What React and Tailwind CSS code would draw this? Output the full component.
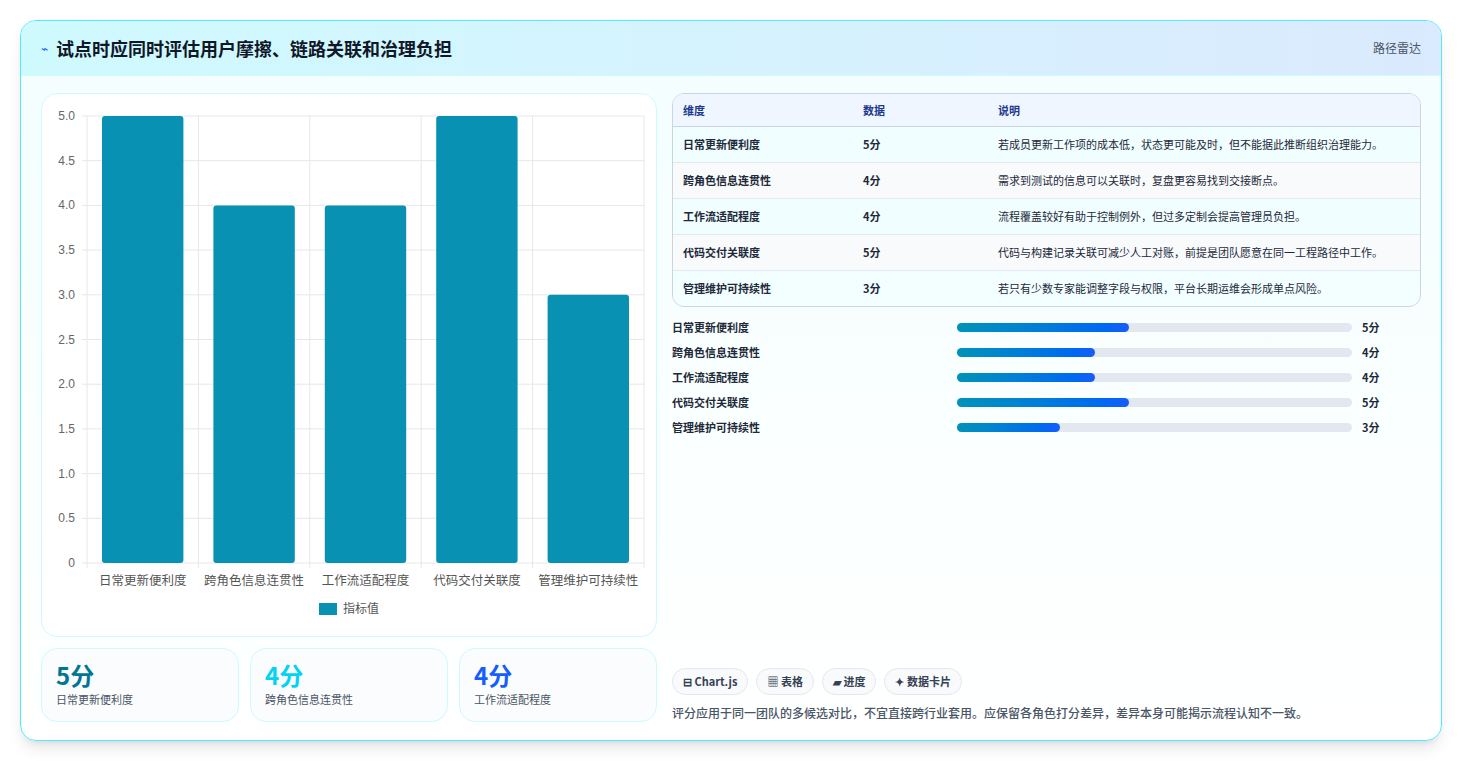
const font = { fontFamily: '"Noto Sans CJK SC", "Noto Sans", sans-serif' };

const rows = [
  { name: '日常更新便利度', v: 5, note: '若成员更新工作项的成本低，状态更可能及时，但不能据此推断组织治理能力。' },
  { name: '跨角色信息连贯性', v: 4, note: '需求到测试的信息可以关联时，复盘更容易找到交接断点。' },
  { name: '工作流适配程度', v: 4, note: '流程覆盖较好有助于控制例外，但过多定制会提高管理员负担。' },
  { name: '代码交付关联度', v: 5, note: '代码与构建记录关联可减少人工对账，前提是团队愿意在同一工程路径中工作。' },
  { name: '管理维护可持续性', v: 3, note: '若只有少数专家能调整字段与权限，平台长期运维会形成单点风险。' },
];

function Chart() {
  const W = 615, H = 543;
  const x0 = 45, x1 = 602, y0 = 22, y1 = 469;
  const ticks = [5, 4.5, 4, 3.5, 3, 2.5, 2, 1.5, 1, 0.5, 0];
  const cw = (x1 - x0) / 5;
  const y = (v) => y1 - (v / 5) * (y1 - y0);
  return (
    <svg width={W} height={H} className="block">
      {ticks.map((t) => (
        <g key={t}>
          <line x1={x0 - 5} x2={x1} y1={y(t)} y2={y(t)} stroke="#e5e7eb" />
          <text x={x0 - 12} y={y(t) + 4} textAnchor="end" fontSize="12" fill="#666" fontFamily="Liberation Sans, sans-serif">
            {t === 0 ? '0' : t.toFixed(1)}
          </text>
        </g>
      ))}
      {[0, 1, 2, 3, 4, 5].map((i) => (
        <line key={i} x1={x0 + i * cw} x2={x0 + i * cw} y1={y0} y2={y1 + 5} stroke="#e5e7eb" />
      ))}
      {rows.map((r, i) => (
        <g key={r.name}>
          <rect x={x0 + i * cw + 15} y={y(r.v)} width={cw - 30} height={y1 - y(r.v)} rx="3" fill="#0891b2" />
          <text x={x0 + i * cw + cw / 2} y={y1 + 22} textAnchor="middle" fontSize="12.5" fill="#555" style={font}>
            {r.name}
          </text>
        </g>
      ))}
      <rect x={277} y={509} width={18} height={12} fill="#0891b2" />
      <text x={301} y={519} fontSize="12" fill="#555" style={font}>指标值</text>
    </svg>
  );
}

export default function App() {
  return (
    <div className="min-h-screen bg-white p-5" style={font}>
      <div className="rounded-2xl border border-cyan-300 overflow-hidden shadow-lg bg-gradient-to-b from-cyan-50/60 to-white">
        <div className="h-[55px] flex items-center justify-between px-5 bg-gradient-to-r from-cyan-100 to-blue-100 border-b border-cyan-100">
          <div className="flex items-center gap-2">
            <span className="text-blue-600 text-xs">⌁</span>
            <span className="text-[18px] font-bold text-gray-900">试点时应同时评估用户摩擦、链路关联和治理负担</span>
          </div>
          <span className="text-[12px] text-gray-600">路径雷达</span>
        </div>
        <div className="flex gap-[15px] px-5 pt-[17px] pb-[18px]">
          <div className="w-[616px] flex flex-col gap-[11px]">
            <div className="rounded-2xl border border-cyan-100 bg-white h-[544px]">
              <Chart />
            </div>
            <div className="flex gap-[11px]">
              {[['5分', '日常更新便利度', 'text-cyan-700'], ['4分', '跨角色信息连贯性', 'text-cyan-400'], ['4分', '工作流适配程度', 'text-blue-600']].map(([v, l, c]) => (
                <div key={l} className="flex-1 h-[74px] rounded-2xl border border-cyan-100 bg-slate-50/60 px-3.5 pt-2.5">
                  <div className={`text-[24px] font-bold leading-8 ${c}`}>{v}</div>
                  <div className="text-[11px] text-gray-600">{l}</div>
                </div>
              ))}
            </div>
          </div>
          <div className="flex-1 flex flex-col">
            <div className="rounded-xl border border-slate-300 overflow-hidden">
              <div className="flex h-[33px] items-center bg-blue-50 border-b border-slate-300 text-[11px] font-bold text-blue-900 px-2.5">
                <div className="w-[180px]">维度</div>
                <div className="w-[135px]">数据</div>
                <div className="flex-1">说明</div>
              </div>
              {rows.map((r, i) => (
                <div key={r.name} className={`flex px-2.5 py-[9px] text-[11px] leading-[17px] text-gray-800 ${i < 4 ? 'border-b border-slate-200' : ''} ${i % 2 ? 'bg-slate-50' : 'bg-cyan-50/50'}`}>
                  <div className="w-[180px] font-semibold">{r.name}</div>
                  <div className="w-[135px] font-semibold">{r.v}分</div>
                  <div className="flex-1 pr-4">{r.note}</div>
                </div>
              ))}
            </div>
            <div className="flex flex-col gap-[9px] mt-[12px]">
              {rows.map((r) => (
                <div key={r.name} className="flex items-center h-4 text-[11px] font-semibold text-gray-800">
                  <div className="w-[285px]">{r.name}</div>
                  <div className="w-[395px] h-[9px] rounded-full bg-slate-200">
                    <div className="h-full rounded-full bg-gradient-to-r from-cyan-600 to-blue-600" style={{ width: r.v * 34.4 }} />
                  </div>
                  <div className="ml-2.5">{r.v}分</div>
                </div>
              ))}
            </div>
            <div className="mt-auto">
              <div className="flex gap-2 text-[11px] font-semibold text-gray-700">
                {['⊟ Chart.js', '▦ 表格', '▰ 进度', '✦ 数据卡片'].map((c) => (
                  <span key={c} className="h-[27px] px-2.5 flex items-center rounded-full border border-slate-200 bg-slate-50">{c}</span>
                ))}
              </div>
              <div className="mt-[9px] text-[12px] text-gray-600 font-medium">评分应用于同一团队的多候选对比，不宜直接跨行业套用。应保留各角色打分差异，差异本身可能揭示流程认知不一致。</div>
            </div>
          </div>
        </div>
      </div>
    </div>
  );
}
